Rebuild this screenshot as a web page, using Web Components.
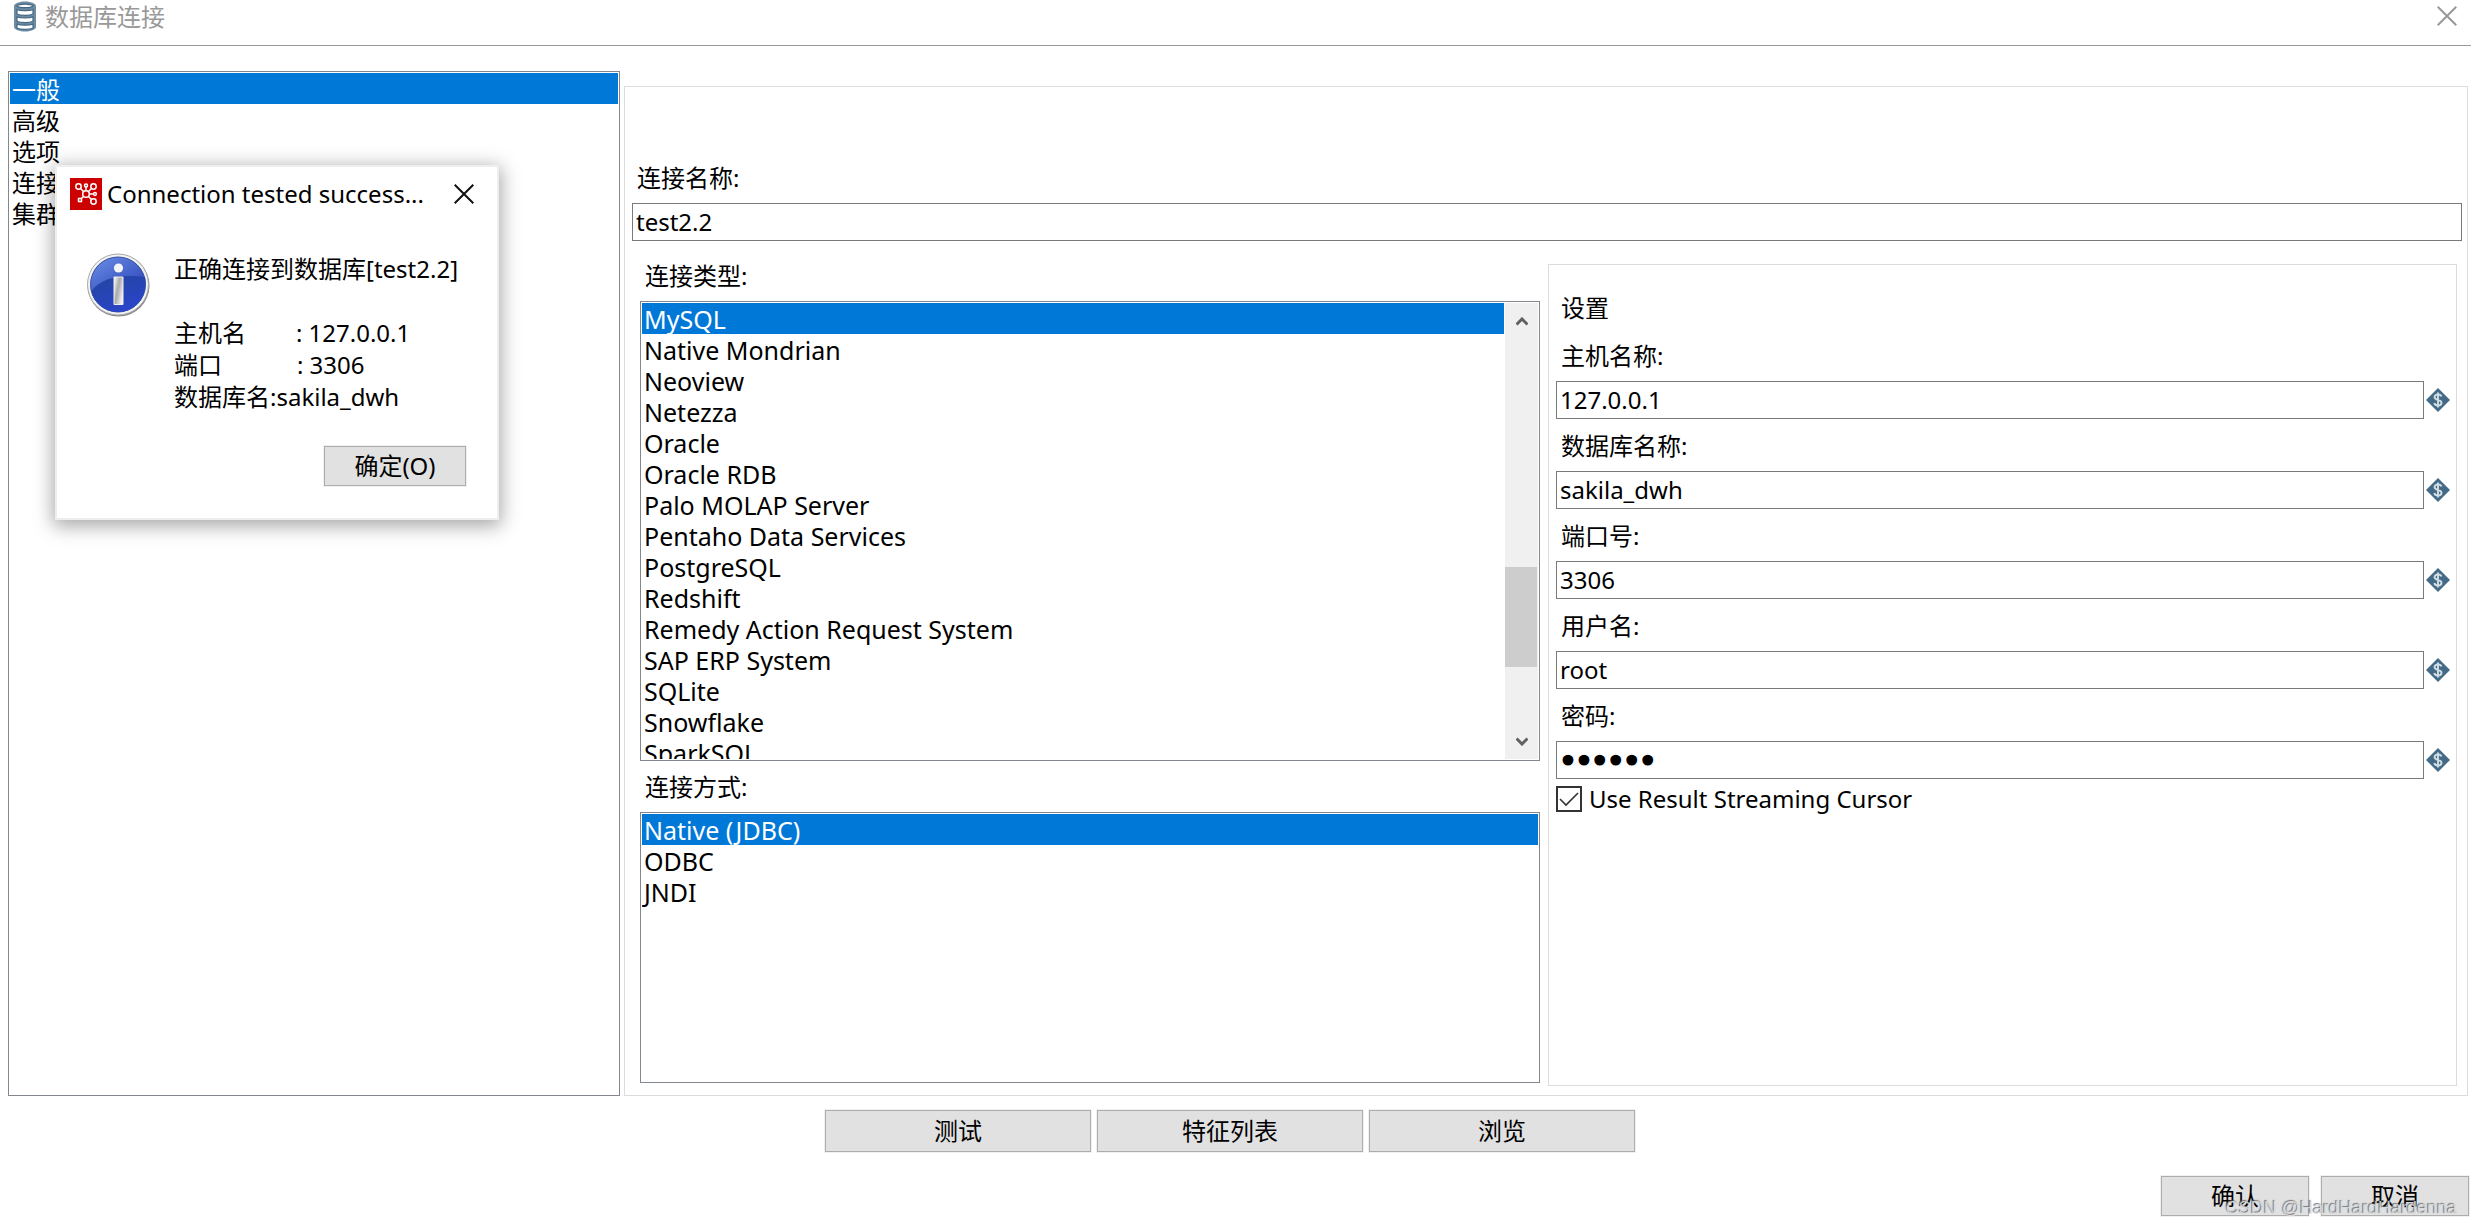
<!DOCTYPE html>
<html lang="zh-CN">
<head>
<meta charset="utf-8">
<title>数据库连接</title>
<style>
html, body { height: 100%; }
body {
  margin: 0;
  background: #fff;
  color: #000;
  font-family: "Noto Sans", "Noto Sans CJK SC", sans-serif;
  font-size: 24px;
  line-height: 32px;
}
</style>
</head>
<body>
<connection-window></connection-window>
<script>
const define = (name, html, setup) => {
  const template = document.createElement('template');
  template.innerHTML = '<style>*{box-sizing:border-box}:host{box-sizing:border-box}</style>' + html;
  customElements.define(name, class extends HTMLElement {
    constructor() {
      super();
      this.attachShadow({ mode: 'open' }).append(template.content.cloneNode(true));
    }
    connectedCallback() { if (setup) setup(this, this.shadowRoot); }
  });
};

define('push-button', `
<style>
  :host { display: block; }
  button {
    display: block; width: 100%; height: 100%; padding: 0;
    font: inherit; color: inherit; text-align: center;
    background: #e1e1e1; border: 1px solid #adadad; border-radius: 0;
    outline: 1px solid #f0f0f0;
  }
</style>
<button type="button"><slot></slot></button>`);

define('close-button', `
<style>
  :host { display: block; }
  button { display: block; padding: 0; border: 0; background: none; color: inherit; }
  svg { display: block; }
</style>
<button type="button" aria-label="Close"><svg width="20" height="20" viewBox="0 0 20 20" fill="none" stroke="currentColor" stroke-width="2"><path d="M.7.7l18.6 18.6M19.3.7L.7 19.3"/></svg></button>`);

define('title-bar', `
<style>
  :host { display: flex; align-items: flex-start; height: 46px; padding: 1px 14px 0 13px; border-bottom: 1px solid #999; color: #999; }
  svg { display: block; }
  h1 { flex: 1; margin: 0 0 0 8px; font: inherit; }
  close-button { margin-top: 5px; }
</style>
<svg width="24" height="31" viewBox="0 0 24 31">
  <path d="M1 5v21c0 2 4 4.500 11 4.500S23 28 23 26V5c0-2-4-4.500-11-4.500S1 3 1 5z" fill="#6d8ba2"/>
  <g fill="#fff" stroke="#436884" stroke-width="1.200">
    <path d="M4 4.800C6 2.500 18 2.500 20 4.800 18 7.200 6 7.200 4 4.800z"/>
    <path d="M4 8.500c3 1.500 13 1.500 16 0v4.500c-3 1.700-13 1.700-16 0z"/>
    <path d="M4 15.800c3 1.500 13 1.500 16 0v4.500c-3 1.700-13 1.700-16 0z"/>
    <path d="M4 23c3 1.500 13 1.500 16 0v4c-3 1.700-13 1.700-16 0z"/>
  </g>
</svg>
<h1><slot></slot></h1>
<close-button></close-button>`);

define('list-item', `
<style>
  :host { display: block; height: 31px; padding: 1px 0 0 2px; line-height: 31px; white-space: nowrap; }
  :host([selected]) { background: #0078d7; color: #fff; }
</style>
<slot></slot>`, el => {
  el.setAttribute('role', 'option');
  el.setAttribute('aria-selected', el.hasAttribute('selected'));
});

define('scroll-bar', `
<style>
  :host { display: flex; flex-direction: column; align-items: center; width: 33px; margin-left: 1px; background: #f0f0f0; }
  svg { flex: none; display: block; margin: 14px 0 13px; }
  .track { flex: 1; width: 100%; display: flex; flex-direction: column; }
  .before { flex: 230; }
  .thumb { flex: 101; background: #cdcdcd; margin-right: 1px; }
  .after { flex: 57; }
</style>
<svg width="12" height="9" viewBox="0 0 12 9" fill="none" stroke="#606060" stroke-width="3"><path d="M.5 7.500L6 2l5.500 5.500"/></svg>
<div class="track"><div class="before"></div><div class="thumb"></div><div class="after"></div></div>
<svg width="12" height="9" viewBox="0 0 12 9" fill="none" stroke="#606060" stroke-width="3"><path d="M.5 1.500L6 7l5.500-5.500"/></svg>`);

define('list-box', `
<style>
  :host { display: flex; min-height: 0; padding: 1px; border: 1px solid #828790; background: #fff; font-size: var(--list-size, 24px); }
  .items { flex: 1; min-width: 0; overflow: hidden; }
  scroll-bar { display: none; }
  :host([scroll]) scroll-bar { display: flex; }
</style>
<div class="items" role="listbox"><slot></slot></div>
<scroll-bar></scroll-bar>`, (el, root) => {
  root.querySelector('.items').setAttribute('aria-label', el.getAttribute('label'));
});

define('variable-mark', `
<style>:host { display: block; } svg { display: block; }</style>
<svg width="24" height="24" viewBox="0 0 24 24">
  <path d="M12 0l12 12-12 12L0 12z" fill="#436a87"/>
  <path d="M15.500 8.500C15 7 13.500 6.500 12 6.500c-2 0-3.500 1-3.500 2.600 0 3.800 7 2 7 5.600 0 1.800-1.500 2.800-3.500 2.800-1.800 0-3.300-.8-3.700-2.500M12 4.500v15" fill="none" stroke="#d3dde4" stroke-width="1.900"/>
</svg>`);

define('text-field', `
<style>
  :host { display: block; }
  label { display: block; margin: 0 0 9px 5px; }
  .line { display: flex; align-items: center; gap: 2px; }
  input {
    flex: 1; min-width: 0; height: 38px; padding: 0 3px 2px;
    font: inherit; color: inherit;
    background: #fff; border: 1px solid #7a7a7a; border-radius: 0; outline: 0;
  }
  input[type=password] { padding-bottom: 0; font-family: "DejaVu Sans", sans-serif; font-size: 27px; -webkit-text-stroke: 3px #000; }
  variable-mark { display: none; }
  :host([variable]) variable-mark { display: block; }
</style>
<label for="field"><slot></slot></label>
<div class="line"><input id="field"><variable-mark></variable-mark></div>`, (el, root) => {
  const input = root.querySelector('input');
  input.type = el.getAttribute('type') || 'text';
  input.value = el.getAttribute('value') || '';
});

define('check-box', `
<style>
  :host { display: block; }
  label { display: flex; align-items: center; gap: 7px; }
  input {
    appearance: none; width: 26px; height: 26px; margin: 0; border: 2px solid #333;
    background: #fff url('data:image/svg+xml,<svg xmlns="http://www.w3.org/2000/svg" viewBox="0 0 22 22"><path d="M2 11l6 6L20 5" fill="none" stroke="%23333" stroke-width="1.6"/></svg>');
  }
</style>
<label><input type="checkbox" checked><span><slot></slot></span></label>`);

define('settings-group', `
<style>
  :host { display: flex; flex-direction: column; gap: 11px; padding: 27px 6px 0 7px; border: 1px solid #dcdcdc; }
  h2 { margin: 0 0 5px 5px; font: inherit; }
  check-box { margin-top: -7px; }
</style>
<h2>设置</h2>
<text-field variable value="127.0.0.1">主机名称:</text-field>
<text-field variable value="sakila_dwh">数据库名称:</text-field>
<text-field variable value="3306">端口号:</text-field>
<text-field variable value="root">用户名:</text-field>
<text-field variable type="password" value="secret">密码:</text-field>
<check-box>Use Result Streaming Cursor</check-box>`);

define('connection-form', `
<style>
  :host { display: flex; flex-direction: column; min-height: 0; padding: 75px 5px 9px 7px; border: 1px solid #dcdcdc; }
  .columns { flex: 1; min-height: 0; display: grid; grid-template-columns: 900fr 909fr; gap: 8px; margin-top: 19px; padding: 0 5px 0 8px; }
  .lists { --list-size: 25px; display: flex; flex-direction: column; min-height: 0; padding-bottom: 3px; }
  .caption { margin: 0 0 9px 5px; }
  .types { flex: 461 1 0; margin-bottom: 10px; }
  .access { flex: 270 1 0; }
  settings-group { margin-top: 4px; }
</style>
<text-field value="test2.2">连接名称:</text-field>
<div class="columns">
  <div class="lists">
    <div class="caption">连接类型:</div>
    <list-box class="types" scroll label="连接类型">
      <list-item selected>MySQL</list-item>
      <list-item>Native Mondrian</list-item>
      <list-item>Neoview</list-item>
      <list-item>Netezza</list-item>
      <list-item>Oracle</list-item>
      <list-item>Oracle RDB</list-item>
      <list-item>Palo MOLAP Server</list-item>
      <list-item>Pentaho Data Services</list-item>
      <list-item>PostgreSQL</list-item>
      <list-item>Redshift</list-item>
      <list-item>Remedy Action Request System</list-item>
      <list-item>SAP ERP System</list-item>
      <list-item>SQLite</list-item>
      <list-item>Snowflake</list-item>
      <list-item>SparkSQL</list-item>
    </list-box>
    <div class="caption">连接方式:</div>
    <list-box class="access" label="连接方式">
      <list-item selected>Native (JDBC)</list-item>
      <list-item>ODBC</list-item>
      <list-item>JNDI</list-item>
    </list-box>
  </div>
  <settings-group></settings-group>
</div>`);

define('message-dialog', `
<style>
  :host { display: block; width: 444px; padding: 11px 13px 32px; background: #fff; border: 2px solid #eee; box-shadow: 0 4px 18px 2px rgba(0,0,0,.35); }
  header { display: flex; align-items: center; }
  header svg { display: block; }
  h2 { flex: 1; margin: 0 0 0 5px; font: inherit; white-space: nowrap; }
  close-button { margin-right: 10px; color: #111; }
  .body { display: flex; gap: 24px; margin: 43px 0 0 17px; }
  .body svg { flex: none; display: block; }
  p { margin: 0; white-space: pre; }
  push-button { width: 142px; height: 40px; margin: 33px 18px 0 auto; }
</style>
<header>
  <svg width="32" height="32" viewBox="0 0 32 32">
    <path fill="#c00" d="M0 0h32v32H0z"/>
    <g fill="none" stroke="#fff" stroke-width="1.500">
      <circle cx="16" cy="16" r="3.300"/><circle cx="8.500" cy="8.500" r="2.700"/><circle cx="23.500" cy="8.500" r="2.700"/><circle cx="23.500" cy="23.500" r="2.700"/>
      <circle cx="16" cy="7.500" r="1.500"/><circle cx="25" cy="16" r="1.400"/><path d="M8.500 20.500h3v3h-3zM10.500 10.500l3 3M21.500 10.500l-3 3M18.500 18.500l3 3M13.500 18.500l-2 2M16 9v3.600M19.400 16h4"/>
    </g>
  </svg>
  <h2>Connection tested success...</h2>
  <close-button></close-button>
</header>
<div class="body">
  <svg width="63" height="64" viewBox="0 0 63 64">
    <defs>
      <linearGradient id="blue" x1="0" y1="0" x2=".6" y2="1"><stop offset="0" stop-color="#6d8fe8"/><stop offset="1" stop-color="#2038ae"/></linearGradient>
      <linearGradient id="deep" x1="0" y1="0" x2=".5" y2="1"><stop offset="0" stop-color="#23459e"/><stop offset="1" stop-color="#2a44c8"/></linearGradient>
      <linearGradient id="steel" x1="0" y1="0" x2="1" y2=".6"><stop offset="0" stop-color="#fff"/><stop offset=".5" stop-color="#aaa"/><stop offset="1" stop-color="#eee"/></linearGradient>
    </defs>
    <circle cx="31.500" cy="32.500" r="31" fill="#888"/>
    <circle cx="31" cy="31.500" r="30.500" fill="#f2f2f2" stroke="#aaa"/>
    <circle cx="31" cy="31.500" r="27.500" fill="url(#blue)" stroke="#3550a0"/>
    <path d="M4.500 38C14 25 34 21 58 24c3 20-10 35-27 35-14 0-25-10-26.500-21z" fill="url(#deep)"/>
    <circle cx="31.500" cy="15" r="4.600" fill="#f4f4f4"/>
    <path d="M27 24h9v27.500h-9z" fill="url(#steel)" stroke="#eee"/>
  </svg>
  <p>正确连接到数据库[test2.2]

主机名        : 127.0.0.1
端口            : 3306
数据库名:sakila_dwh</p>
</div>
<push-button>确定(O)</push-button>`);

define('connection-window', `
<style>
  :host { position: relative; display: flex; flex-direction: column; height: 100%; overflow: hidden; }
  main { flex: 1; min-height: 0; display: grid; grid-template-columns: 612fr 1844fr; grid-template-rows: minmax(0, 1fr); gap: 4px; padding: 25px 3px 0 8px; }
  connection-form { margin-top: 15px; }
  .tools { display: flex; justify-content: center; gap: 6px; margin: 14px 11px 0 0; }
  .tools push-button { width: 266px; height: 42px; }
  .actions { display: flex; justify-content: flex-end; gap: 12px; margin: 24px 2px 9px 0; }
  .actions push-button { width: 148px; height: 40px; }
  message-dialog { position: absolute; left: 55px; top: 165px; }
  .watermark {
    position: absolute; right: 14px; bottom: 5px; font: 18px/24px "Liberation Sans", sans-serif;
    color: rgba(225,225,225,.85); text-shadow: -1px -1px 1px rgba(90,90,90,.8);
  }
</style>
<title-bar>数据库连接</title-bar>
<main>
  <list-box label="数据库连接">
    <list-item selected>一般</list-item>
    <list-item>高级</list-item>
    <list-item>选项</list-item>
    <list-item>连接池</list-item>
    <list-item>集群</list-item>
  </list-box>
  <connection-form></connection-form>
</main>
<div class="tools">
  <push-button>测试</push-button>
  <push-button>特征列表</push-button>
  <push-button>浏览</push-button>
</div>
<div class="actions">
  <push-button>确认</push-button>
  <push-button>取消</push-button>
</div>
<message-dialog role="dialog" aria-label="Connection tested"></message-dialog>
<div class="watermark">CSDN @HardHardHardenna</div>`);
</script>
</body>
</html>
